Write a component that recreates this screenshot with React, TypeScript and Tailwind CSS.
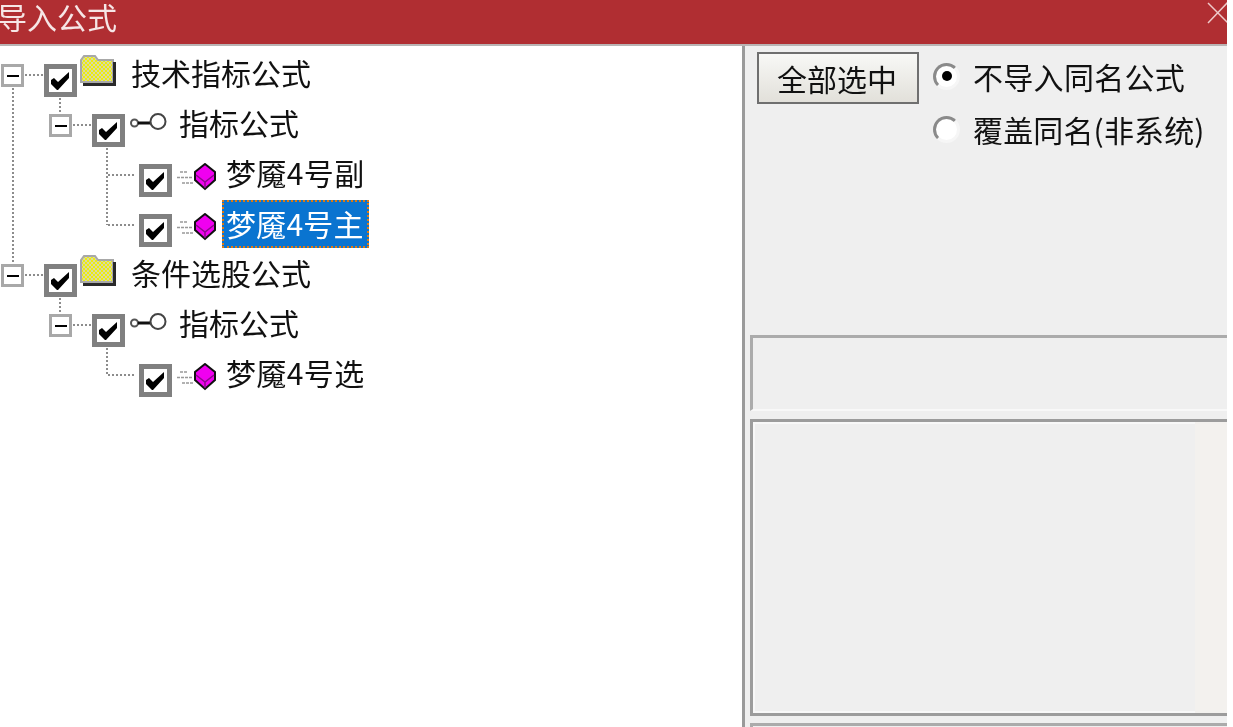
import type { ReactNode } from "react";

const cjk = "font-['Noto_Sans_CJK_SC','Noto_Sans',sans-serif]";

function Expander() {
  return (
    <span className="mt-[14px] flex h-[23px] w-[23px] shrink-0 items-center justify-center border-[3px] border-[#a8a8a8] bg-white">
      <span className="h-[2px] w-[12px] bg-black" />
    </span>
  );
}

function Check() {
  return (
    <span className="mt-[14px] flex h-[33px] w-[33px] shrink-0 items-center justify-center border-[5px] border-[#808080] bg-white">
      <svg width="23" height="23" viewBox="0 0 23 23">
        <path d="M2 11l3-2 4 4L20 3v6L9 21H8L2 15z" fill="#000" />
      </svg>
    </span>
  );
}

function Folder() {
  return (
    <svg className="ml-[2px] mt-[4px] shrink-0" width="38" height="36" viewBox="0 0 38 36">
      <defs>
        <pattern id="dither" width="4" height="4" patternUnits="userSpaceOnUse">
          <rect width="4" height="4" fill="#ecec10" />
          <rect width="2" height="2" fill="#d8d8a8" />
          <rect x="2" y="2" width="2" height="2" fill="#d8d8a8" />
        </pattern>
      </defs>
      <path d="M2 28V6l3-4h11l3 4h15v22z" fill="url(#dither)" stroke="#a8a8a8" strokeWidth="2" />
      <path d="M4 29h30V8h3v24H4z" fill="#2a2a2a" />
    </svg>
  );
}

function Key() {
  return (
    <svg className="ml-[5px] mt-[13px] shrink-0" width="37" height="20" viewBox="0 0 37 20">
      <circle cx="4.5" cy="10" r="3.5" fill="#fff" stroke="#555" strokeWidth="2" />
      <path d="M8 10h13" stroke="#111" strokeWidth="3" />
      <circle cx="28" cy="8.5" r="7.5" fill="#fff" stroke="#444" strokeWidth="2" />
    </svg>
  );
}

function Cube() {
  return (
    <svg className="ml-[5px] mt-[13px] shrink-0" width="39" height="28" viewBox="0 0 39 28">
      <path d="M3 9h7M0 14.5h16M5 20h11" stroke="#999" strokeWidth="1.5" strokeDasharray="3 1" />
      <path d="M28 1l10 8v8l-10 9-10-9V9z" fill="#f000f0" stroke="#111" strokeWidth="2" />
      <path d="M19 12l9 7 9-7M28 19v6" fill="none" stroke="#8a0a8a" strokeWidth="1.5" />
    </svg>
  );
}

function Row({ indent, children }: { indent: string; children: ReactNode }) {
  return <div className={`flex h-[50px] items-start ${indent}`}>{children}</div>;
}

function Label({ className, children }: { className: string; children: ReactNode }) {
  return <span className={`h-[50px] whitespace-nowrap text-[30px] leading-[44px] text-[#111] ${className}`}>{children}</span>;
}

function Formula({ name, selected }: { name: string; selected?: boolean }) {
  return (
    <Row indent="pl-[139px]">
      <Check />
      <Cube />
      {selected ? (
        <span className="ml-[6px] h-[48px] whitespace-nowrap border-2 border-dotted border-[#e07a10] bg-[#0a74d0] pl-[2px] pr-[3px] text-[30px] leading-[42px] tracking-[0.2px] text-white">
          {name}
        </span>
      ) : (
        <Label className="ml-[10px] tracking-[0.4px]">{name}</Label>
      )}
    </Row>
  );
}

function Group({ name }: { name: string }) {
  return (
    <Row indent="pl-[1px]">
      <Expander />
      <span className="ml-[20px]" />
      <Check />
      <Folder />
      <Label className="ml-[14px]">{name}</Label>
    </Row>
  );
}

function Sub() {
  return (
    <Row indent="pl-[49px]">
      <Expander />
      <span className="ml-[20px]" />
      <Check />
      <Key />
      <Label className="ml-[12px]">指标公式</Label>
    </Row>
  );
}

function Connectors() {
  const lines = "M13 88V262M25 75H44M25 275H44M60 98V114M60 298V314M73 125H92M73 325H92M107 148V225M107 348V375M108 175H136M108 225H136M108 375H136";
  return (
    <svg className="pointer-events-none absolute left-0 top-0" width="150" height="400" viewBox="0 46 150 400">
      <path d={lines} stroke="#8c8c8c" strokeWidth="2" strokeDasharray="2 2" fill="none" />
    </svg>
  );
}

function Radio({ checked }: { checked?: boolean }) {
  return (
    <span className="flex h-[27px] w-[27px] shrink-0 items-center justify-center rounded-full border-[3px] border-b-[#f6f6f6] border-l-[#8a8a8a] border-r-[#f6f6f6] border-t-[#8a8a8a] bg-white">
      {checked && <span className="h-[10px] w-[10px] rounded-full bg-black" />}
    </span>
  );
}

export default function App() {
  return (
    <div className={`h-[727px] w-[1227px] overflow-hidden bg-white blur-[0.6px] ${cjk}`}>
      <div className="flex h-[44px] items-start justify-between bg-[#b02e32]">
        <span className="-ml-[3px] text-[30px] leading-[32px] text-[#f6e6e6]">导入公式</span>
        <svg className="mt-[2px]" width="20" height="22" viewBox="0 0 20 22">
          <path d="M1 1l24 24M1 21L21 0" stroke="#eec9c9" strokeWidth="1.5" />
        </svg>
      </div>
      <div className="flex h-[683px] border-t-2 border-[#b9b4b4]">
        <div className="relative w-[742px] shrink-0 bg-white pt-[4px]">
          <Connectors />
          <div className="relative">
            <Group name="技术指标公式" />
            <Sub />
            <Formula name="梦魇4号副" />
            <Formula name="梦魇4号主" selected />
            <Group name="条件选股公式" />
            <Sub />
            <Formula name="梦魇4号选" />
          </div>
        </div>
        <div className="flex-1 border-l-[3px] border-[#9a9a9a] bg-[#efefef]">
          <div className="flex pl-[12px] pt-[6px]">
            <button className="h-[52px] w-[162px] border-2 border-[#6f6f6f] bg-gradient-to-b from-[#f8f8f6] to-[#e2e0da] pr-[2px] text-[30px] leading-[40px] text-[#111]">
              全部选中
            </button>
            <div className="ml-[14px] flex flex-col gap-[25px] pt-[10px]">
              <div className="flex h-[28px] items-center gap-[14px]">
                <Radio checked />
                <span className="-ml-[1px] whitespace-nowrap text-[30px] leading-[28px] tracking-[0.3px] text-[#111]">不导入同名公式</span>
              </div>
              <div className="flex h-[28px] items-center gap-[14px]">
                <Radio />
                <span className="-ml-[1px] whitespace-nowrap text-[30px] leading-[28px] tracking-[0.15px] text-[#111]">覆盖同名(非系统)</span>
              </div>
            </div>
          </div>
          <div className="ml-[5px] mt-[192px] h-[76px] border-b-2 border-l-[3px] border-t-[3px] border-b-[#f8f8f8] border-l-[#ababab] border-t-[#ababab]" />
          <div className="ml-[5px] mt-[8px] flex h-[297px] border-b-[3px] border-l-[3px] border-t-[3px] border-[#9c9c9c] bg-[#efefef]">
            <div className="flex-1 border-b-2 border-l-2 border-t-2 border-[#f8f8f8]" />
            <div className="w-[32px] bg-[#f3f1ee]" />
          </div>
          <div className="ml-[5px] mt-[7px] h-[10px] border-l-[3px] border-t-[3px] border-[#ababab]" />
        </div>
      </div>
    </div>
  );
}
